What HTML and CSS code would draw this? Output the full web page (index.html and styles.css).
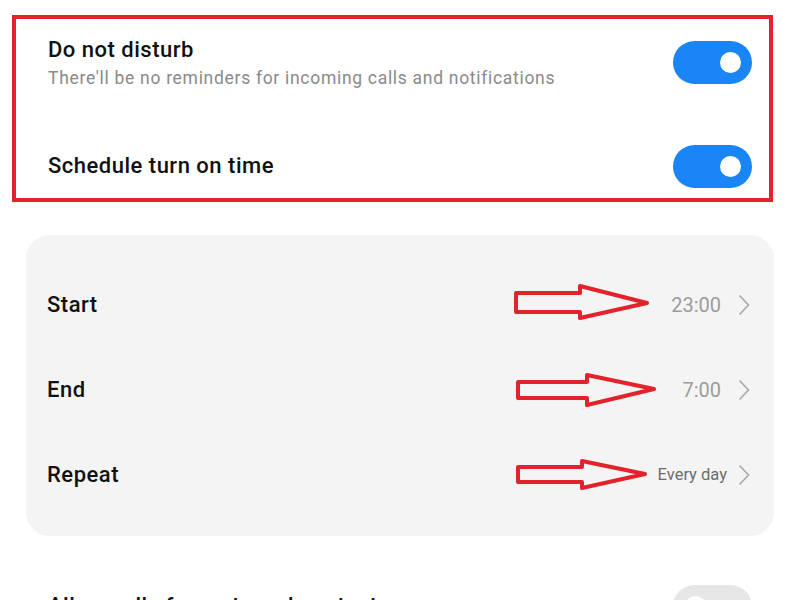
FILE: index.html
```html
<!DOCTYPE html>
<html lang="en">
<head>
  <meta charset="UTF-8" />
  <title>Do not disturb</title>
  <link rel="stylesheet" href="styles.css">
</head>
<body>
  <!-- 高亮区域 -->
  <div class="highlight">
    <div class="row row-top">
      <div class="text">
        <div class="title">Do not disturb</div>
        <div class="subtitle">There'll be no reminders for incoming calls and notifications</div>
      </div>
      <span class="switch on"></span>
    </div>
    <div class="row row-schedule">
      <div class="title">Schedule turn on time</div>
      <span class="switch on"></span>
    </div>
  </div>

  <!-- 时间设置卡片 -->
  <div class="card">
    <div class="item">
      <span class="label">Start</span>
      <span class="value">23:00</span>
      <svg class="chevron" viewBox="0 0 12 22"><path d="M1.5 1.5 L10.5 11 L1.5 20.5" /></svg>
    </div>
    <div class="item">
      <span class="label">End</span>
      <span class="value">7:00</span>
      <svg class="chevron" viewBox="0 0 12 22"><path d="M1.5 1.5 L10.5 11 L1.5 20.5" /></svg>
    </div>
    <div class="item">
      <span class="label">Repeat</span>
      <span class="value small">Every day</span>
      <svg class="chevron" viewBox="0 0 12 22"><path d="M1.5 1.5 L10.5 11 L1.5 20.5" /></svg>
    </div>

    <!-- 红色箭头标注 -->
    <svg class="arrows" viewBox="0 0 748 301">
      <polygon points="490,58 554,58 554,51 621,68 554,83 554,77 490,77" />
      <polygon points="492,147 561,147 561,140 628,154 561,170 561,163 492,163" />
      <polygon points="492,232 556,232 556,226 619,239 556,253 556,247 492,247" />
    </svg>
  </div>

  <div class="row row-bottom">
    <div class="title">Allow calls from starred contacts</div>
    <span class="switch"></span>
  </div>
</body>
</html>
```

FILE: styles.css
```css
/* 页面基础样式 */
body {
  font-family: Roboto, "Noto Sans", Arial, sans-serif;
  background: #fff;
  color: #111;
  margin: 0;
  height: 600px;
  overflow: hidden;
}

.title {
  font-size: 22px;
  line-height: 28px;
  font-weight: 500;
  letter-spacing: 0.5px;
  color: #111;
}
.subtitle {
  font-size: 17.5px;
  line-height: 22px;
  letter-spacing: 0.7px;
  color: #8a8a8a;
  margin-top: 3px;
}

/* 红框 */
.highlight {
  margin: 15px 27px 0 12px;
  border: 4px solid #e3222b;
  padding: 0 17px 0 32px;
  height: 179px;
}
.row {
  display: flex;
  align-items: center;
  justify-content: space-between;
}
.row-top {
  height: 86px;
}
.row-schedule {
  height: 64px;
  margin-top: 29px;
}

/* 开关 */
.switch {
  position: relative;
  width: 79px;
  height: 43px;
  border-radius: 22px;
  background: #e6e6e6;
  flex-shrink: 0;
}
.switch::after {
  content: "";
  position: absolute;
  top: 11px;
  left: 12px;
  width: 21px;
  height: 21px;
  border-radius: 50%;
  background: #fff;
}
.switch.on {
  background: #1a85f6;
}
.switch.on::after {
  left: auto;
  right: 11px;
}

/* 卡片 */
.card {
  position: relative;
  margin: 33px 26px 0 26px;
  background: #f4f4f4;
  border-radius: 24px;
  padding: 27px 24px 19px 21px;
}
.item {
  display: flex;
  align-items: center;
  height: 85px;
}
.label {
  font-size: 22px;
  font-weight: 500;
  letter-spacing: 0.5px;
  flex: 1;
}
.value {
  font-size: 20px;
  color: #9c9c9c;
  margin-right: 17px;
}
.value.small {
  font-size: 16.5px;
  color: #6c6c6c;
  margin-right: 11px;
}
.chevron {
  width: 12px;
  height: 22px;
  fill: none;
  stroke: #a8a8a8;
  stroke-width: 1.6;
}

/* 箭头标注 */
.arrows {
  position: absolute;
  left: 0;
  top: 0;
  width: 748px;
  height: 301px;
  fill: none;
  stroke: #e3222b;
  stroke-width: 4;
  stroke-linejoin: round;
}

.row-bottom {
  height: 64px;
  margin: 38px 48px 0 48px;
}
```
